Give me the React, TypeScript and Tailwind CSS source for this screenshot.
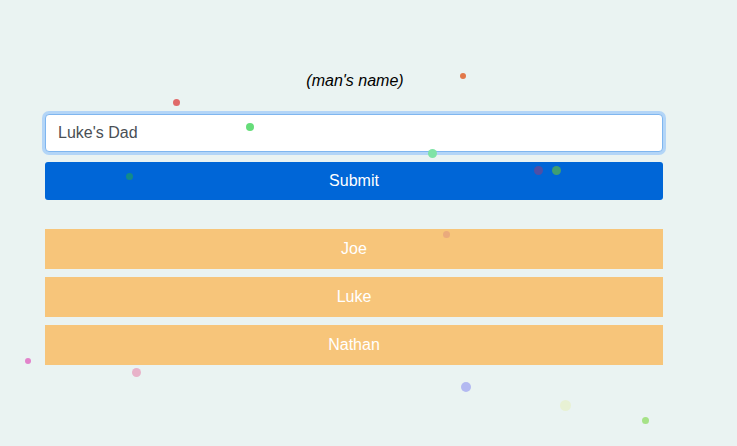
const dots = [
  { x: 176, y: 102, d: 7, c: "#e06a6a" },
  { x: 463, y: 76, d: 6, c: "#e2784a" },
  { x: 250, y: 127, d: 8, c: "#66dd7a" },
  { x: 432, y: 153, d: 9, c: "#7ee3a6" },
  { x: 129, y: 176, d: 7, c: "#128a8a" },
  { x: 538, y: 170, d: 9, c: "#4f4fa6" },
  { x: 556, y: 170, d: 9, c: "#3f9e72" },
  { x: 446, y: 234, d: 7, c: "#eaaa7c" },
  { x: 28, y: 361, d: 6, c: "#e283cb" },
  { x: 136, y: 372, d: 9, c: "#e8b2c9" },
  { x: 466, y: 387, d: 10, c: "#b3b9f1" },
  { x: 565, y: 405, d: 11, c: "#e8f1d4" },
  { x: 645, y: 420, d: 7, c: "#a6e287" },
];

const names = ["Joe", "Luke", "Nathan"];

export default function App() {
  return (
    <main
      className="relative min-h-[446px] w-full overflow-hidden bg-[#eaf3f2]"
      style={{ fontFamily: '"Liberation Sans", Arial, sans-serif' }}
    >
      <div className="ml-[45px] flex w-[618px] flex-col pt-[71px]">
        {/* question */}
        <p className="h-[20px] pl-[2px] text-center text-[16px] italic leading-[20px] text-black">
          (man's name)
        </p>

        <input
          className="mt-[23px] h-[38px] w-full rounded-[4px] border border-[#7fb6ef] bg-white px-[12px] text-[16px] text-[#4a4f55] outline-none ring-[3px] ring-[#b3d5f7]"
          defaultValue="Luke's Dad"
        />

        <button className="mt-[10px] h-[38px] w-full rounded-[3px] bg-[#0066d7] text-[16px] text-white">
          Submit
        </button>

        {/* answers */}
        <div className="mt-[29px] flex flex-col gap-[8px]">
          {names.map((n) => (
            <div
              key={n}
              className="flex h-[40px] items-center justify-center bg-[#f7c57a] text-[16px] text-white"
            >
              {n}
            </div>
          ))}
        </div>
      </div>

      {/* confetti particles */}
      {dots.map((p, i) => (
        <span
          key={i}
          className="absolute rounded-full"
          style={{
            left: p.x - p.d / 2,
            top: p.y - p.d / 2,
            width: p.d,
            height: p.d,
            background: p.c,
          }}
        />
      ))}
    </main>
  );
}
